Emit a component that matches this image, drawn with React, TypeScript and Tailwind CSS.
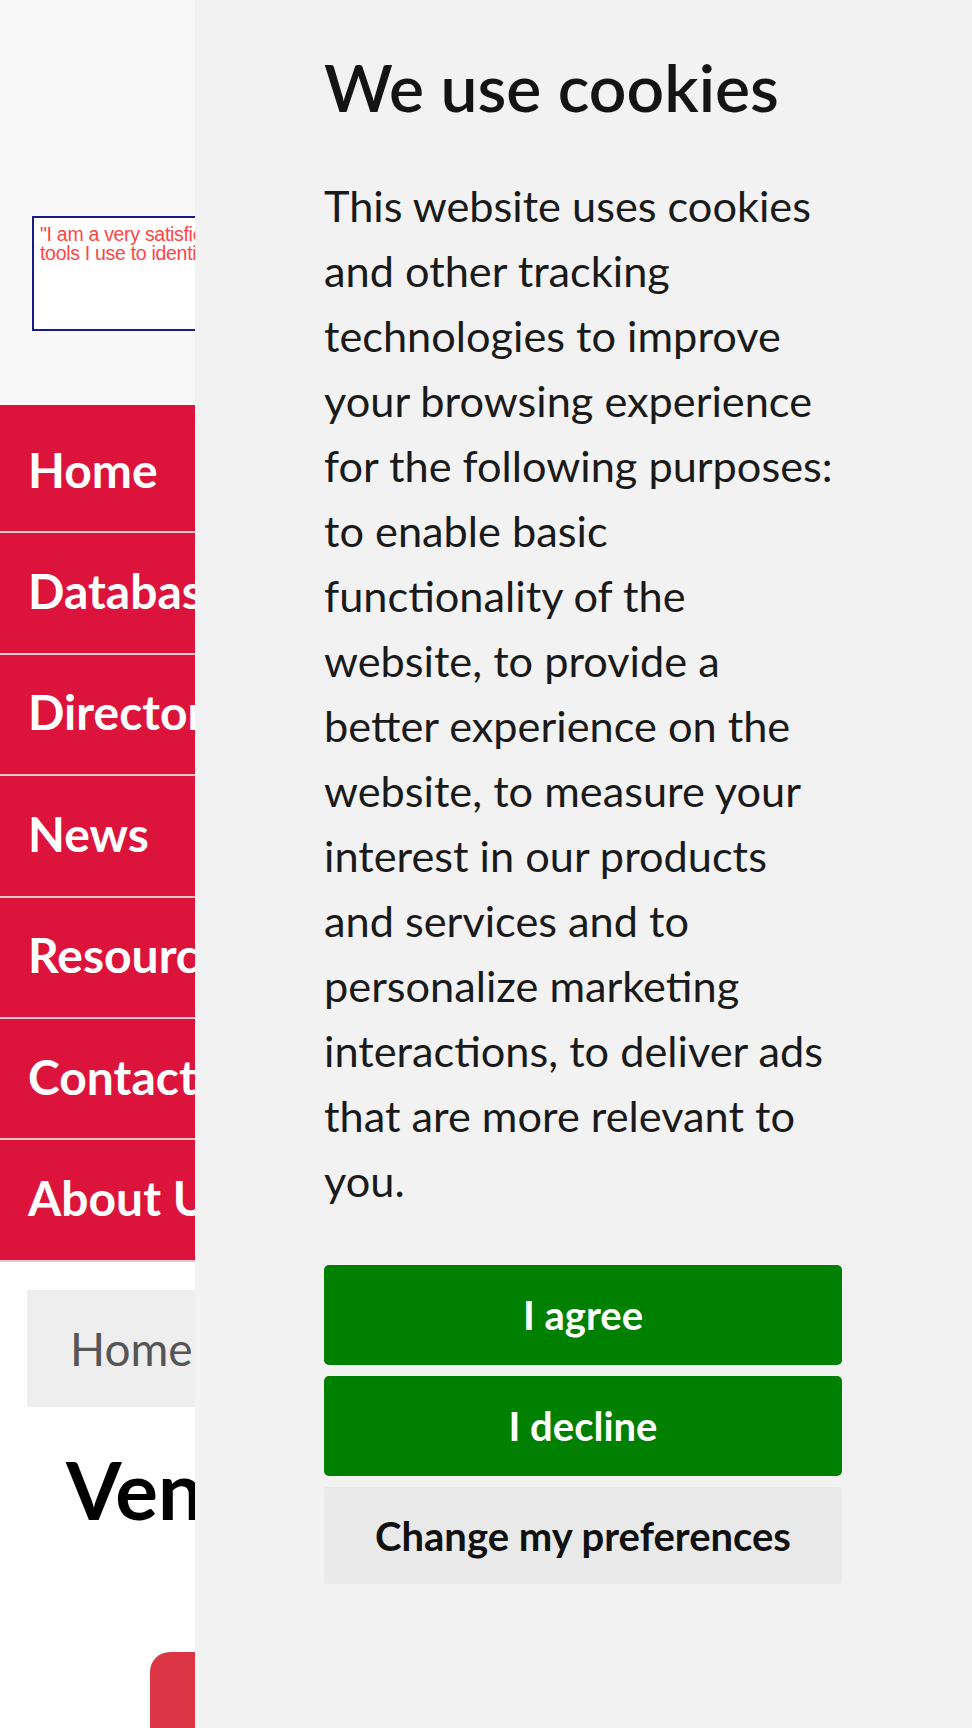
import React from "react";

const navItems = ["Home", "Database", "Directory", "News", "Resources", "Contact", "About Us"];

function CookiePanel() {
  return (
    <div className="absolute top-0 right-0 h-full w-[777px] bg-[#f2f2f2]">
      <div className="ml-[129px] w-[518px] pt-[47px]">
        <h2 className="text-[66px] leading-[1.2] font-semibold text-[#141414]">We use cookies</h2>
        <p className="mt-[47px] text-[43.3px] leading-[65px] text-[#1a1a1a]">
          This website uses cookies and other tracking technologies to improve your browsing experience for the
          following purposes: to enable basic functionality of the website, to provide a better experience on the
          website, to measure your interest in our products and services and to personalize marketing interactions, to
          deliver ads that are more relevant to you.
        </p>
        <div className="mt-[52px] flex flex-col gap-[11px]">
          <button className="h-[100px] w-full rounded-[5px] bg-[#008000] text-[40px] font-bold text-white">
            I agree
          </button>
          <button className="h-[100px] w-full rounded-[5px] bg-[#008000] text-[40px] font-bold text-white">
            I decline
          </button>
          <button className="h-[97px] w-full rounded-[3px] bg-[#e9e9e9] text-[40px] font-bold text-[#111]">
            Change my preferences
          </button>
        </div>
      </div>
    </div>
  );
}

export default function App() {
  return (
    <div className="relative h-[1728px] w-full overflow-hidden bg-white font-['Lato',sans-serif]">
      {/* page behind the overlay */}
      <div className="h-[405px] bg-[#f8f8f8] pt-[216px] pl-[32px]">
        <div className="h-[115px] w-[340px] border-2 border-[#1a1a8c] bg-white px-[6px] pt-[7px] font-['Liberation_Sans',Arial,sans-serif] text-[19.5px] leading-[19px] tracking-[-0.3px] text-[#ff4545]">
          "I am a very satisfied user of the
          <br />
          tools I use to identify vendors."
        </div>
      </div>

      <nav className="bg-[#dc143c] pt-[7px]">
        {navItems.map((item) => (
          <div
            key={item}
            className="flex h-[121.4px] items-center border-b-2 border-[#e8c6cc] pb-[4px] pl-[28px] text-[48px] font-bold text-white"
          >
            {item}
          </div>
        ))}
      </nav>

      <div className="mt-[28px] ml-[27px] mr-[27px] flex h-[117px] items-center bg-[#eeeeee] pl-[43px] text-[46px] text-[#555]">
        Home / Vendors
      </div>

      <h1 className="mt-[34px] ml-[66px] text-[80px] leading-[1.2] font-bold text-black">Vendors</h1>

      <div className="mt-[115px] ml-[150px] h-[120px] w-[420px] rounded-[20px] bg-[#dc3545]" />

      <CookiePanel />
    </div>
  );
}
